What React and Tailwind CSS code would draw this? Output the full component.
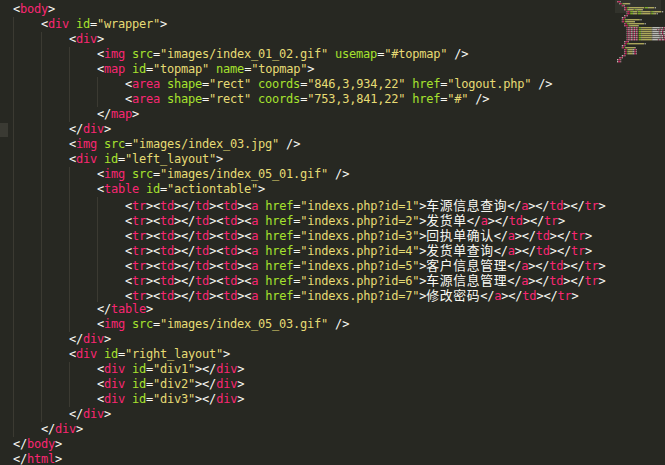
import React from "react";

const lines = [
  [0, '<body>'],
  [1, '<div id="wrapper">'],
  [2, '<div>'],
  [3, '<img src="images/index_01_02.gif" usemap="#topmap" />'],
  [3, '<map id="topmap" name="topmap">'],
  [4, '<area shape="rect" coords="846,3,934,22" href="logout.php" />'],
  [4, '<area shape="rect" coords="753,3,841,22" href="#" />'],
  [3, '</map>'],
  [2, '</div>'],
  [2, '<img src="images/index_03.jpg" />'],
  [2, '<div id="left_layout">'],
  [3, '<img src="images/index_05_01.gif" />'],
  [3, '<table id="actiontable">'],
  [4, '<tr><td></td><td><a href="indexs.php?id=1">车源信息查询</a></td></tr>'],
  [4, '<tr><td></td><td><a href="indexs.php?id=2">发货单</a></td></tr>'],
  [4, '<tr><td></td><td><a href="indexs.php?id=3">回执单确认</a></td></tr>'],
  [4, '<tr><td></td><td><a href="indexs.php?id=4">发货单查询</a></td></tr>'],
  [4, '<tr><td></td><td><a href="indexs.php?id=5">客户信息管理</a></td></tr>'],
  [4, '<tr><td></td><td><a href="indexs.php?id=6">车源信息管理</a></td></tr>'],
  [4, '<tr><td></td><td><a href="indexs.php?id=7">修改密码</a></td></tr>'],
  [3, '</table>'],
  [3, '<img src="images/index_05_03.gif" />'],
  [2, '</div>'],
  [2, '<div id="right_layout">'],
  [3, '<div id="div1"></div>'],
  [3, '<div id="div2"></div>'],
  [3, '<div id="div3"></div>'],
  [2, '</div>'],
  [1, '</div>'],
  [0, '</body>'],
  [0, '</html>'],
];

// very small html highlighter
function tokenize(s) {
  const out = [];
  let i = 0;
  while (i < s.length) {
    if (s[i] === '<') {
      let j = i + 1;
      if (s[j] === '/') j++;
      out.push(['p', s.slice(i, j)]);
      let k = j;
      while (k < s.length && /[a-z0-9]/i.test(s[k])) k++;
      out.push(['t', s.slice(j, k)]);
      i = k;
      while (i < s.length && s[i] !== '>') {
        const c = s[i];
        if (c === ' ' || c === '/' || c === '=') {
          out.push(['p', c]);
          i++;
        } else if (c === '"') {
          const e = s.indexOf('"', i + 1);
          out.push(['s', s.slice(i, e + 1)]);
          i = e + 1;
        } else {
          let k2 = i;
          while (k2 < s.length && /[a-z-]/i.test(s[k2])) k2++;
          out.push(['a', s.slice(i, k2)]);
          i = k2;
        }
      }
      if (i < s.length) {
        out.push(['p', '>']);
        i++;
      }
    } else {
      let k = s.indexOf('<', i);
      if (k < 0) k = s.length;
      out.push(['x', s.slice(i, k)]);
      i = k;
    }
  }
  return out;
}

const colorClass = {
  p: 'text-[#f8f8f2]',
  t: 'text-[#f92672]',
  a: 'text-[#a6e22e]',
  s: 'text-[#e6db74]',
  x: 'text-[#f8f8f2]',
};

const hex = { p: '#f8f8f2', t: '#f92672', a: '#a6e22e', s: '#e6db74', x: '#f8f8f2' };

function CodeLine({ depth, text, idx }) {
  const toks = tokenize(text);
  return (
    <div className="flex h-[15px] items-center leading-[15px]">
      <div className="w-[13px] h-full shrink-0 flex items-center">
        {idx === 8 && <div className="w-[8px] h-[14px] bg-[#3a3a33]" />}
      </div>
      {Array.from({ length: depth }).map((_, d) => (
        <span key={d} className="inline-block w-[28px] h-full shrink-0 border-l border-[#3b3a32]" />
      ))}
      <span className="whitespace-pre h-[15px] leading-[15px]">
        {toks.map(([k, v], n) =>
          k === 'x' ? (
            <span
              key={n}
              className="text-[#f8f8f2] text-[12.8px] leading-[15px] tracking-[0.7px]"
              style={{ fontFamily: '"Noto Sans CJK SC", sans-serif' }}
            >
              {v}
            </span>
          ) : (
            <span key={n} className={colorClass[k]}>{v}</span>
          )
        )}
      </span>
    </div>
  );
}

function Minimap() {
  const rects = [];
  lines.forEach(([depth, text], li) => {
    let col = depth * 4;
    tokenize(text).forEach(([k, v], n) => {
      const w = k === 'x' ? v.length * 2 : v.length;
      if (v.trim()) {
        rects.push(
          <rect key={li + '-' + n} x={2 + col * 0.6} y={1 + li * 2} width={w * 0.6} height={1.4} fill={hex[k]} opacity={0.7} />
        );
      }
      col += w;
    });
  });
  return (
    <svg width="50" height="70" viewBox="0 0 50 70">
      <rect x="0" y="0" width="46" height="13" fill="#3a3a34" opacity="0.6" />
      {rects}
    </svg>
  );
}

export default function App() {
  return (
    <div className="w-[665px] h-[465px] bg-[#272822] flex overflow-hidden">
      <div
        className="flex-1 pt-[2px] text-[12px] tracking-[-0.224px]"
        style={{ fontFamily: '"DejaVu Sans Mono", monospace' }}
      >
        {lines.map(([d, t], i) => (
          <CodeLine key={i} depth={d} text={t} idx={i} />
        ))}
      </div>
      <div className="w-[50px] shrink-0">
        <Minimap />
      </div>
    </div>
  );
}
